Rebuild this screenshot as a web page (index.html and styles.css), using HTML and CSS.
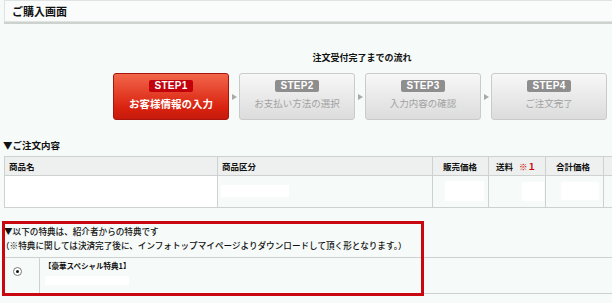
FILE: index.html
```html
<!DOCTYPE html>
<html lang="ja">
<head>
<meta charset="utf-8">
<title>ご購入画面</title>
<link rel="stylesheet" href="styles.css">
</head>
<body>
<div class="page">
  <div class="titlebar">ご購入画面</div>

  <div class="flow">
    <div class="flow-title">注文受付完了までの流れ</div>
    <div class="steps">
      <div class="step active">
        <span class="badge">STEP1</span>
        <span class="step-text">お客様情報の入力</span>
      </div>
      <span class="arrow"></span>
      <div class="step">
        <span class="badge">STEP2</span>
        <span class="step-text">お支払い方法の選択</span>
      </div>
      <span class="arrow"></span>
      <div class="step">
        <span class="badge">STEP3</span>
        <span class="step-text">入力内容の確認</span>
      </div>
      <span class="arrow"></span>
      <div class="step">
        <span class="badge">STEP4</span>
        <span class="step-text">ご注文完了</span>
      </div>
    </div>
  </div>

  <div class="section-title">▼ご注文内容</div>
  <table class="order">
    <colgroup>
      <col class="c-name"><col class="c-kind"><col class="c-price"><col class="c-ship"><col class="c-total"><col class="c-rest">
    </colgroup>
    <thead>
      <tr>
        <th>商品名</th>
        <th>商品区分</th>
        <th>販売価格</th>
        <th>送料 <span class="note">※１</span></th>
        <th>合計価格</th>
        <th></th>
      </tr>
    </thead>
    <tbody>
      <tr>
        <td class="white"></td>
        <td><span class="blank b-kind"></span></td>
        <td><span class="blank b-price"></span></td>
        <td><span class="blank b-ship"></span></td>
        <td><span class="blank b-total"></span></td>
        <td></td>
      </tr>
    </tbody>
  </table>

  <div class="bonus">
    <p class="bonus-line">▼以下の特典は、紹介者からの特典です</p>
    <p class="bonus-line">（※特典に関しては決済完了後に、インフォトップマイページよりダウンロードして頂く形となります。）</p>
    <table class="bonus-table">
      <tr>
        <td class="radio-cell"><span class="radio"></span></td>
        <td class="bonus-cell">
          <div class="bonus-name">【豪華スペシャル特典1】</div>
          <span class="blank b-bonus"></span>
        </td>
      </tr>
    </table>
    <div class="frame"></div>
  </div>
</div>
</body>
</html>
```

FILE: styles.css
```css
html, body {
  margin: 0;
  padding: 0;
}
body {
  width: 612px;
  height: 303px;
  overflow: hidden;
  background: #f6faf8;
  font-family: "Noto Sans CJK JP", "Noto Sans", sans-serif;
  color: #111;
}
.page {
  position: relative;
}
.titlebar {
  margin-left: 4px;
  height: 20px;
  border: 1px solid #dfe3e1;
  border-right: none;
  background: #f9fcfb;
  box-shadow: 0 2px 0 #cdd2cf;
  font-size: 11px;
  font-weight: 700;
  line-height: 20px;
  padding-left: 7px;
}
.flow {
  padding-left: 113px;
  width: 494px;
  margin-top: 30px;
}
.flow-title {
  text-align: center;
  font-size: 9px;
  font-weight: 700;
  line-height: 12px;
  height: 12px;
  padding-left: 4px;
}
.steps {
  display: flex;
  align-items: center;
  margin-top: 9px;
}
.step {
  box-sizing: border-box;
  width: 116px;
  height: 47px;
  border: 1px solid #c9cbca;
  border-radius: 3px;
  background: linear-gradient(#f7f7f7, #dcdcdc);
  display: flex;
  flex-direction: column;
  align-items: center;
  padding-top: 6px;
}
.step.active {
  border-color: #a8150c;
  background: linear-gradient(#f2664a, #d9220f 75%, #c61a0c);
}
.badge {
  width: 44px;
  height: 12px;
  border-radius: 2px;
  background: #8e8e8e;
  color: #fff;
  font-family: "Liberation Sans", Arial, sans-serif;
  font-weight: 700;
  font-size: 10px;
  line-height: 12px;
  text-align: center;
  letter-spacing: 0.3px;
}
.step.active .badge {
  background: #c2000c;
}
.step-text {
  margin-top: 5px;
  font-size: 9.5px;
  line-height: 13px;
  color: #a2a2a2;
}
.step.active .step-text {
  font-size: 10.5px;
  font-weight: 700;
  color: #fff;
}
.arrow {
  width: 0;
  height: 0;
  border-top: 3px solid transparent;
  border-bottom: 3px solid transparent;
  border-left: 5px solid #a9a9a9;
  margin: 0 2px 0 3px;
}
.section-title {
  margin: 19px 0 0 3px;
  font-size: 9.5px;
  font-weight: 700;
  line-height: 12px;
}
.order {
  margin: 5px 0 0 4px;
  width: 620px;
  table-layout: fixed;
  border-collapse: collapse;
}
.c-name { width: 213px; }
.c-kind { width: 215px; }
.c-price { width: 56px; }
.c-ship { width: 57px; }
.c-total { width: 58px; }
.order th, .order td {
  border: 1px solid #cdd1cf;
  padding: 0;
}
.order th {
  height: 18px;
  background: #eef0ef;
  font-size: 8.5px;
  font-weight: 700;
  text-align: left;
  padding-left: 4px;
  white-space: nowrap;
}
.order th:nth-child(3) { padding-left: 10px; }
.order th:nth-child(4) { padding-left: 7px; }
.order th:nth-child(5) { padding-left: 10px; }
.order .note {
  color: #c00;
  margin-left: 4px;
  font-weight: 700;
}
.order td {
  height: 31px;
  position: relative;
}
.order td.white {
  background: #fff;
}
.blank {
  position: absolute;
  background: #fff;
}
.b-kind { left: 3px; top: 9px; width: 68px; height: 12px; }
.b-price { left: 12px; top: 5px; width: 39px; height: 20px; }
.b-ship { left: 33px; top: 6px; width: 22px; height: 19px; }
.b-total { left: 15px; top: 6px; width: 38px; height: 18px; }
.bonus {
  position: relative;
  margin-top: 13px;
  padding-top: 3px;
}
.bonus-line {
  margin: 0 0 0 4px;
  font-size: 8.6px;
  line-height: 14px;
  white-space: nowrap;
  font-weight: 500;
}
.bonus-line + .bonus-line {
  margin-left: 1px;
}
.bonus-table {
  margin: 5px 0 0 4px;
  width: 620px;
  border-collapse: collapse;
}
.bonus-table td {
  border-top: 1px solid #cdd1cf;
  border-bottom: 1px solid #cdd1cf;
  height: 35px;
  padding: 0;
  vertical-align: top;
}
.radio-cell {
  width: 35px;
  border-right: 1px solid #cdd1cf;
  position: relative;
}
.radio {
  position: absolute;
  left: 9px;
  top: 9px;
  width: 7px;
  height: 7px;
  border: 1px solid #7b7b7b;
  border-radius: 50%;
  background: #fff;
}
.radio::after {
  content: "";
  position: absolute;
  left: 2px;
  top: 2px;
  width: 3px;
  height: 3px;
  border-radius: 50%;
  background: #111;
}
.bonus-cell {
  position: relative;
  padding-left: 4px !important;
}
.bonus-name {
  font-size: 7.5px;
  font-weight: 700;
  line-height: 10px;
  margin-top: 3px;
}
.b-bonus { left: 5px; top: 18px; width: 84px; height: 9px; }
.frame {
  position: absolute;
  left: 2px;
  top: 0;
  width: 422px;
  height: 75px;
  box-sizing: border-box;
  border: 3px solid #c8070f;
  pointer-events: none;
}
```
